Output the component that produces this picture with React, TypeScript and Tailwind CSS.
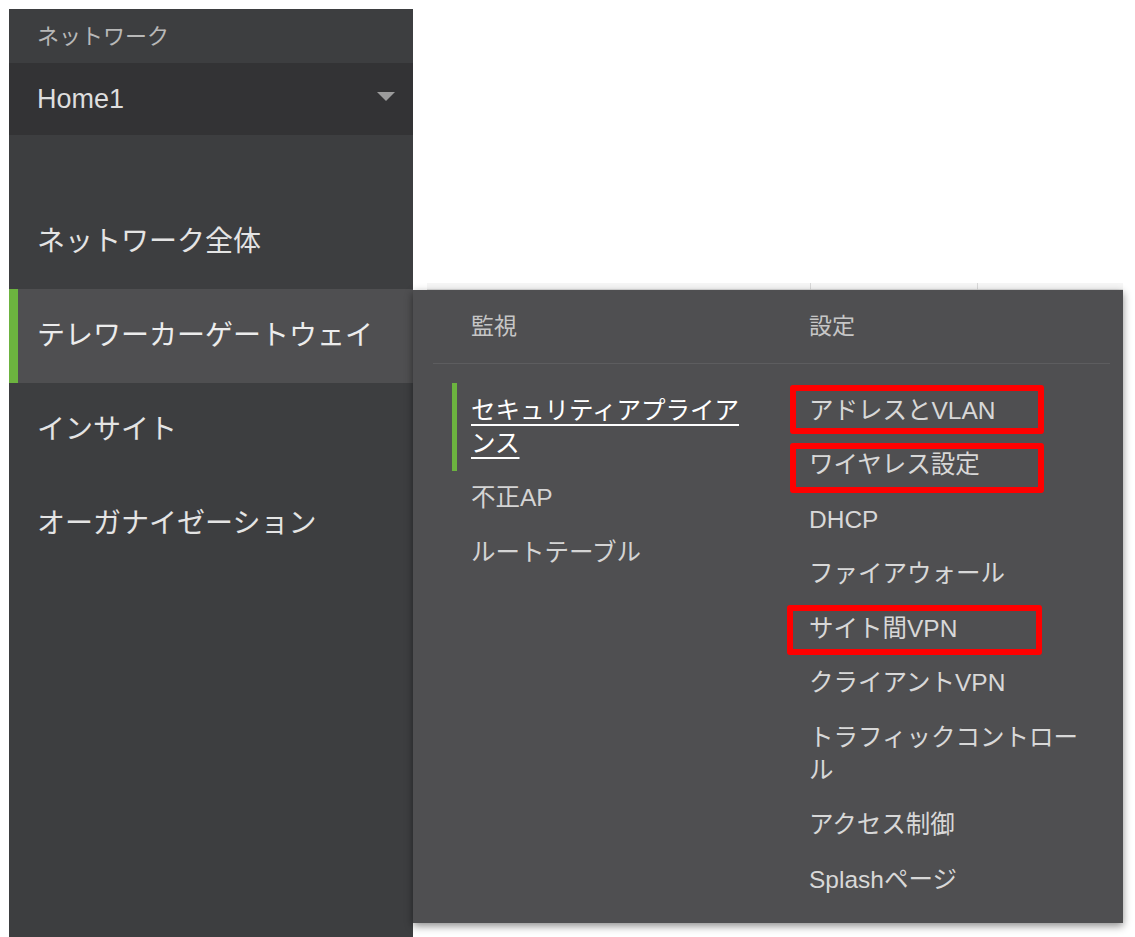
export default function App() {
  const sideItems = ["ネットワーク全体", "テレワーカーゲートウェイ", "インサイト", "オーガナイゼーション"];
  const leftItems = ["不正AP", "ルートテーブル"];
  const rightItems: { label: string; box?: string }[] = [
    { label: "アドレスとVLAN", box: "top-[2px] left-[-19px] w-[254px] h-[49px]" },
    { label: "ワイヤレス設定", box: "top-[5px] left-[-19px] w-[254px] h-[50px]" },
    { label: "DHCP" },
    { label: "ファイアウォール" },
    { label: "サイト間VPN", box: "top-[4px] left-[-22px] w-[255px] h-[50px]" },
    { label: "クライアントVPN" },
    { label: "トラフィックコントロール" },
    { label: "アクセス制御" },
    { label: "Splashページ" },
  ];
  return (
    <div className="relative w-[1135px] h-[937px] overflow-hidden bg-white pl-[9px] pt-[9px] font-['Liberation_Sans','Noto_Sans_CJK_JP',sans-serif]">
      {/* faint page content behind */}
      <div className="absolute left-[427px] top-[283px] w-[696px] h-[7px] bg-[#f6f6f6] border-b border-[#dedede]" />
      <div className="absolute left-[810px] top-[283px] w-px h-[7px] bg-[#d8d8d8]" />
      <div className="absolute left-[977px] top-[283px] w-px h-[7px] bg-[#d8d8d8]" />

      <div className="flex h-[928px] w-[404px] flex-col bg-[#3d3e40]">
        <div className="flex h-[54px] items-center pl-[28px] text-[22px] text-[#b8b8b8]">ネットワーク</div>
        <div className="flex h-[72px] items-center justify-between bg-[#333335] pl-[28px] pr-[18px] text-[27px] text-[#dedede]">
          <span>Home1</span>
          <svg width="18" height="10" viewBox="0 0 18 10" className="mt-[-4px]">
            <path d="M0 0 H18 L9 9 Z" fill="#9c9c9c" />
          </svg>
        </div>
        <div className="h-[60px]" />
        {sideItems.map((t, i) =>
          i === 1 ? (
            <div key={t} className="flex h-[94px] items-center border-l-[9px] border-[#6cb33f] bg-[#4f4f51] pl-[19px] text-[28px] text-[#ececec]">
              {t}
            </div>
          ) : (
            <div key={t} className="flex h-[94px] items-center pl-[28px] text-[28px] text-[#e4e4e4]">
              {t}
            </div>
          )
        )}
      </div>

      {/* flyout menu */}
      <div className="absolute left-[413px] top-[290px] h-[633px] w-[710px] bg-[#4f4f51] shadow-[0_3px_8px_rgba(0,0,0,0.45)]">
        <div className="flex h-[73px] items-center text-[23px] text-[#c6c6c6]">
          <div className="w-[396px] pl-[58px]">監視</div>
          <div>設定</div>
        </div>
        <div className="ml-[20px] mr-[13px] h-px bg-[#5d5d5f]" />
        <div className="flex pt-[19px]">
          <div className="w-[396px] pl-[39px]">
            <div className="border-l-[5px] border-[#6cb33f] py-[10.75px] pl-[14px]">
              <span className="block w-[285px] text-[24.5px] leading-[33px] text-white underline decoration-[2px] underline-offset-[5px]">
                セキュリティアプライアンス
              </span>
            </div>
            {leftItems.map((t) => (
              <div key={t} className="py-[10.75px] pl-[19px] text-[24.5px] leading-[33px] text-[#d4d4d4]">
                {t}
              </div>
            ))}
          </div>
          <div className="w-[300px]">
            {rightItems.map((it) => (
              <div key={it.label} className="relative w-[285px] py-[10.75px] text-[24.5px] leading-[33px] text-[#d8d8d8]">
                {it.label}
                {it.box && (
                  <div className={`absolute rounded-[3px] border-[6px] border-[#ff0000] ${it.box}`} />
                )}
              </div>
            ))}
          </div>
        </div>
      </div>
    </div>
  );
}
